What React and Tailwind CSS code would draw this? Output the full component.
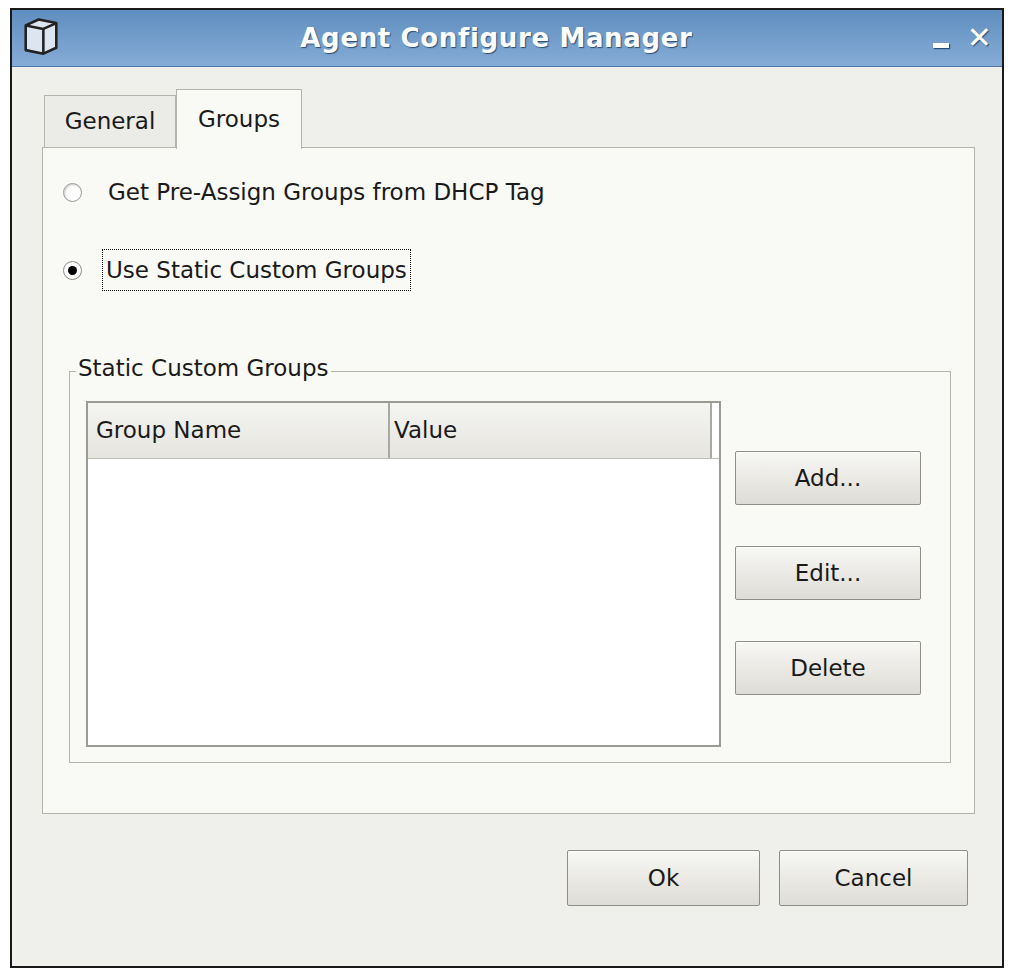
import React from 'react';

const font = { fontFamily: '"DejaVu Sans", sans-serif' };

const Btn = ({ children, className = '' }) => (
  <button className={`border border-[#8e8e87] rounded-[2px] bg-gradient-to-b from-[#f7f7f4] to-[#dedcd6] text-[23px] text-[#1a1a1a] shadow-[inset_0_1px_0_#fff] ${className}`}>
    {children}
  </button>
);

export default function App() {
  return (
    <div className="w-[1018px] h-[970px] bg-white pt-[8px] pl-[10px]" style={font}>
      <div className="w-[994px] h-[960px] border-2 border-[#1a1a1a] bg-[#efefec] flex flex-col">
        <div className="h-[57px] bg-gradient-to-b from-[#5f8ec0] to-[#86acd6] border-b border-[#4c76a4] flex items-center px-[10px] relative">
          <svg width="38" height="40" viewBox="0 0 32 34" className="mt-[-4px]">
            <path d="M3 8 L14 3 L29 6 L29 27 L18 32 L3 29 Z" fill="#dde6f0" stroke="#222" strokeWidth="2.2" strokeLinejoin="round" />
            <path d="M3 8 L18 11 L29 6 M18 11 L18 32" fill="none" stroke="#222" strokeWidth="2.2" strokeLinejoin="round" />
          </svg>
          <div className="flex-1 text-center text-white font-bold text-[26px] tracking-wide [text-shadow:1px_1px_1px_#2c4d73]">Agent Configure Manager</div>
          <div className="flex items-center gap-[18px] text-white font-bold [text-shadow:1px_1px_1px_#2c4d73]">
            <span className="w-[16px] h-[5px] bg-white mt-[14px] shadow-[1px_1px_1px_#2c4d73]" />
            <span className="text-[30px] leading-none">✕</span>
          </div>
        </div>

        <div className="ml-[30px] mt-[22px] w-[933px]">
          <div className="flex items-end h-[58px]">
            <div className="w-[132px] h-[52px] border border-[#b4b3ac] border-b-0 bg-[#ebebe7] flex items-center justify-center text-[23px] text-[#1a1a1a] ml-[2px]">General</div>
            <div className="w-[126px] h-[60px] border border-[#b4b3ac] border-b-0 bg-[#f9f9f5] flex items-center justify-center text-[23px] text-[#1a1a1a] mb-[-2px] relative z-10">Groups</div>
          </div>
          <div className="h-[667px] border border-[#b4b3ac] bg-[#f9f9f5] pt-[26px] pl-[20px]">
            <div className="flex items-center h-[36px]">
              <span className="w-[19px] h-[19px] rounded-full border border-[#9a9a94] bg-white shadow-[inset_1px_1px_2px_#ccc]" />
              <span className="ml-[26px] text-[23px] text-[#1a1a1a]">Get Pre-Assign Groups from DHCP Tag</span>
            </div>
            <div className="flex items-center mt-[39px] h-[42px]">
              <span className="w-[19px] h-[19px] rounded-full border border-[#8a8a85] bg-white flex items-center justify-center">
                <span className="w-[9px] h-[9px] rounded-full bg-black" />
              </span>
              <span className="ml-[20px] px-[3px] h-[42px] flex items-center border border-dotted border-black text-[23px] text-[#1a1a1a]">Use Static Custom Groups</span>
            </div>

            <div className="ml-[6px] mt-[80px] w-[882px] h-[392px] border border-[#b4b3ac] relative pt-[29px] pl-[16px] flex">
              <span className="absolute left-[6px] top-[-15px] bg-[#f9f9f5] px-[2px] text-[23px] text-[#1a1a1a] leading-none">Static Custom Groups</span>
              <div className="w-[635px] h-[346px] border-2 border-[#9b9a94] bg-white">
                <div className="flex h-[56px] bg-white border-b border-[#bdbcb5]">
                  <div className="w-[302px] border-r-2 border-[#a9a8a2] flex items-center px-[8px] text-[23px] text-[#1a1a1a] bg-gradient-to-b from-[#f4f4f1] to-[#e6e5e0]">Group Name</div>
                  <div className="w-[322px] border-r-2 border-[#a9a8a2] flex items-center px-[4px] text-[23px] text-[#1a1a1a] bg-gradient-to-b from-[#f4f4f1] to-[#e6e5e0]">Value</div>
                </div>
              </div>
              <div className="ml-[14px] mt-[50px] flex flex-col gap-[41px]">
                <Btn className="w-[186px] h-[54px]">Add...</Btn>
                <Btn className="w-[186px] h-[54px]">Edit...</Btn>
                <Btn className="w-[186px] h-[54px]">Delete</Btn>
              </div>
            </div>
          </div>
        </div>

        <div className="flex justify-end gap-[19px] mt-[36px] mr-[34px]">
          <Btn className="w-[193px] h-[56px]">Ok</Btn>
          <Btn className="w-[189px] h-[56px]">Cancel</Btn>
        </div>
      </div>
    </div>
  );
}
